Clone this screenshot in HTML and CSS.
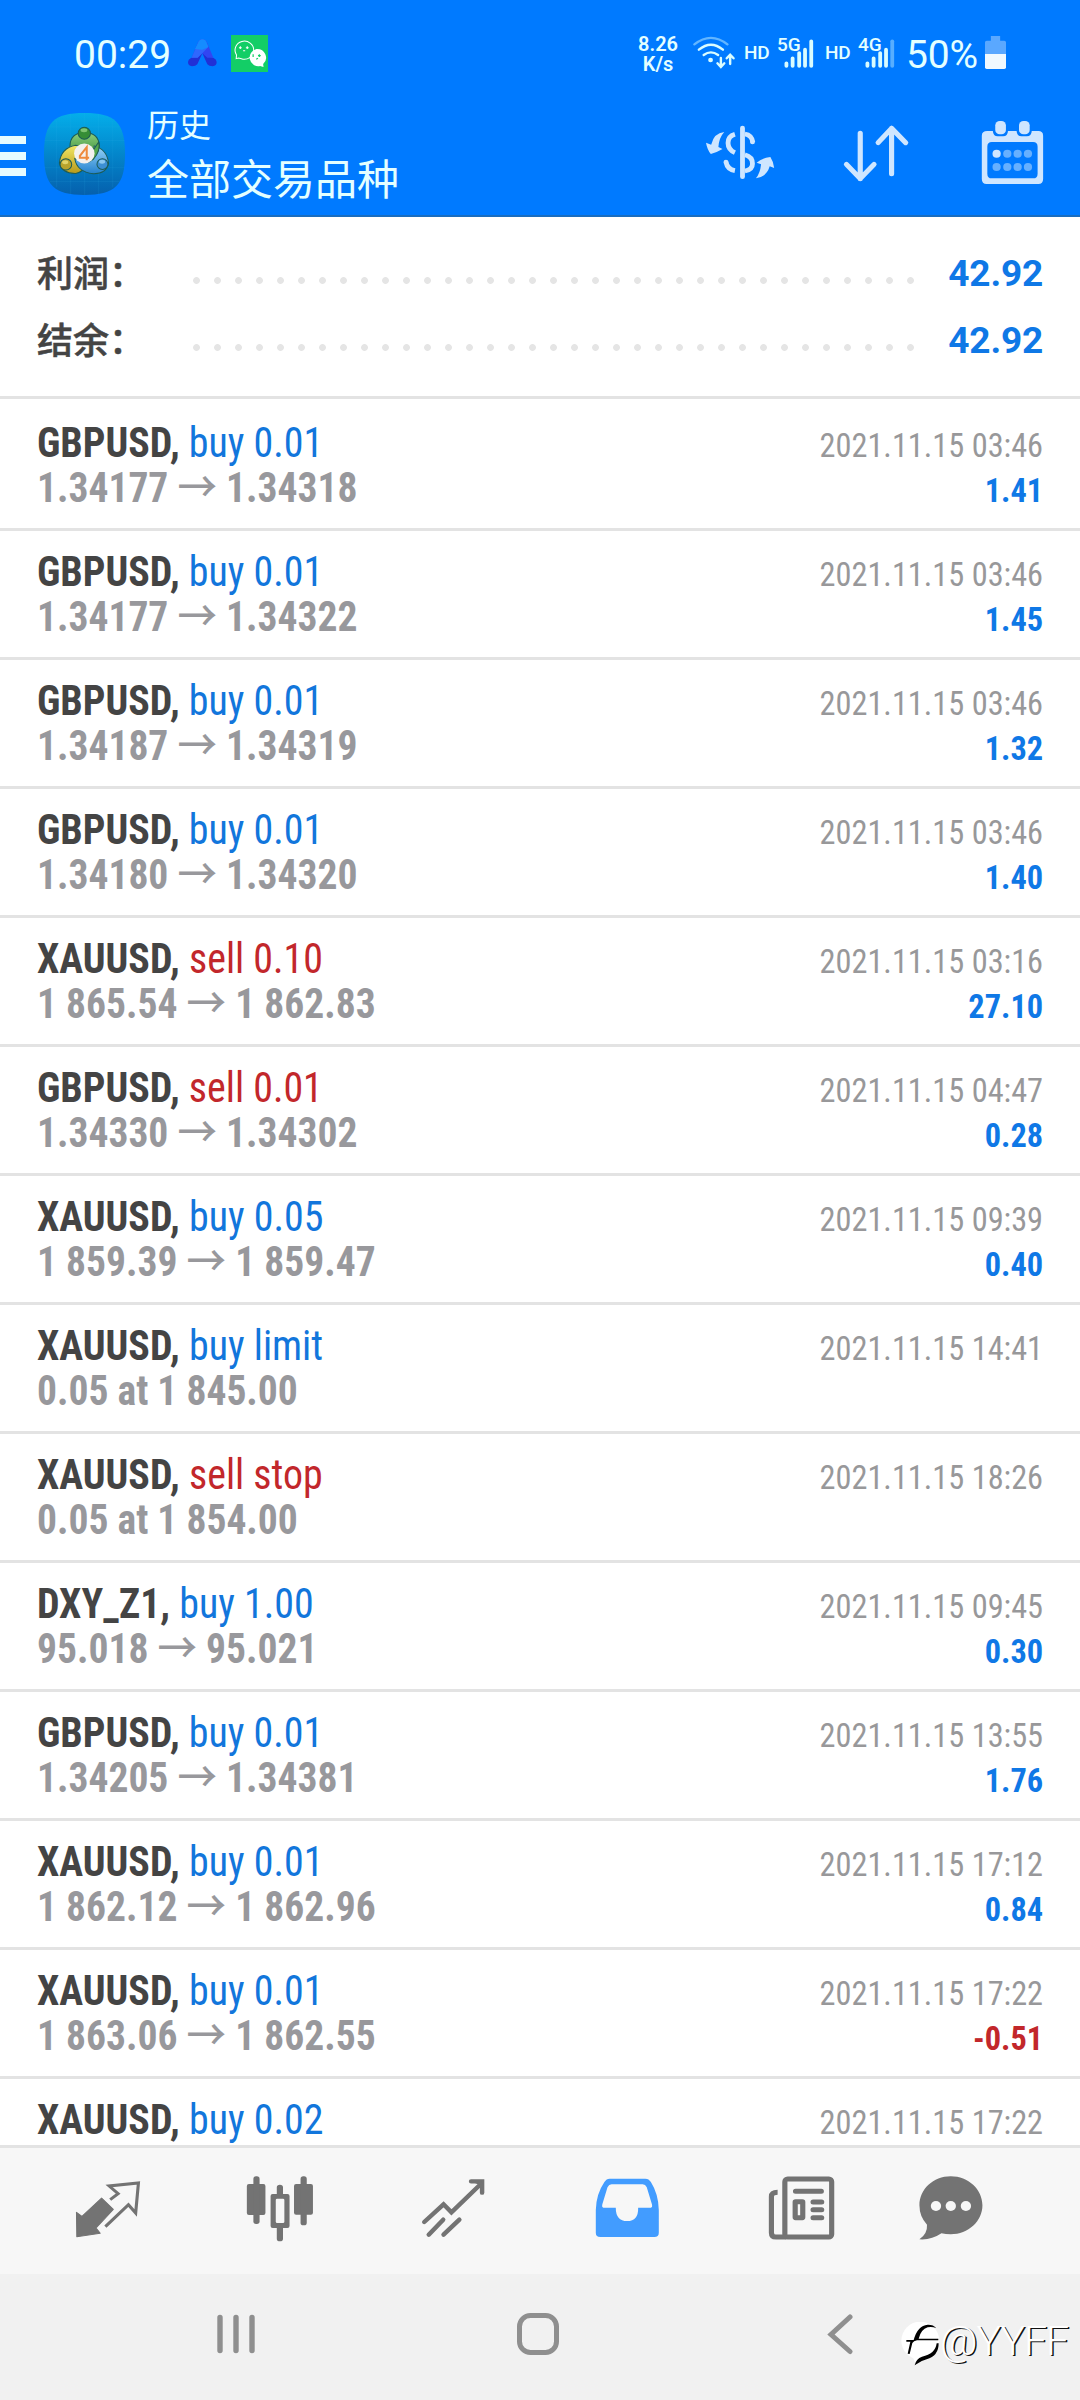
FILE: index.html
```html
<!DOCTYPE html>
<html lang="zh-CN">
<head>
<meta charset="utf-8">
<title>历史</title>
<link rel="stylesheet" href="styles.css">
</head>
<body>
<div class="screen">
  <header class="top">
    <div class="status">
      <span class="clock">00:29</span>
      <svg class="note-a" viewBox="545 118 87 84" preserveAspectRatio="none">
        <path d="M574 149l14 12-15 33q-5 6-16 6-12-2-12-13 0-8 9-12l10-3z" fill="#2130d6"/>
        <path d="M602 150l-14 11 15 33q5 6 16 6 12-2 12-13 0-8-9-12l-9-3z" fill="#2130d6"/>
        <path d="M574 130q5-11 14-11 10 0 15 12l18 43h-18l-15-13-14 13h-18z" fill="#3146f2"/>
        <path d="M588 119q9 0 13 10l5 13-18 19-14 13h-18l19-44q4-11 13-11z" fill="#2f68fd"/>
        <path d="M588 119q9 0 13 10l5 13-18 8-22-2 9-18q4-11 13-11z" fill="#158cff"/>
      </svg>
      <svg class="note-w" viewBox="671 105 107 111" preserveAspectRatio="none">
        <rect x="671" y="105" width="107" height="111" fill="#13ce66"/>
        <path d="M686 176l1-11a27 27 0 1 1 14 11l-8-2z" fill="none" stroke="#fff" stroke-width="3"/>
        <path d="M694 143h8M698 139v8M714 143h8M718 139v8M706 152h6" stroke="#fff" stroke-width="3"/>
        <path d="M745 147a25 26 0 1 0 10 51l10 3-1-9a26 26 0 0 0-19-45z" fill="#fff"/>
        <path d="M735 163v8M749 167h8M753 163v8M744 178l5-3" stroke="#13ce66" stroke-width="3.5"/>
      </svg>
      <span class="speed">8.26<br>K/s</span>
      <svg class="wifi" viewBox="440 102 128 111" preserveAspectRatio="none" fill="none" stroke="#d9fcff" stroke-width="7" stroke-linecap="round">
        <path d="M447 133Q495 94 543 133" opacity=".45"/>
        <path d="M460 149Q495 119 530 149M474 165Q495 149 516 165"/>
        <circle cx="494" cy="180" r="3.5" fill="#d9fcff"/>
        <path d="M524 174v26m-10-10l10 11 10-11M551 192v-27m-10 10l10-11 10 11"/>
      </svg>
      <span class="hd">HD</span>
      <span class="signal"><b>5G</b>
        <svg viewBox="711 118 87 90" preserveAspectRatio="none" stroke="#d9fcff" stroke-width="11" stroke-linecap="round"><path d="M718 191v8M736 176v23M755 160v39M772 150v49M790 125v74"/></svg></span>
      <span class="hd">HD</span>
      <span class="signal"><b>4G</b>
        <svg viewBox="711 118 87 90" preserveAspectRatio="none" stroke="#d9fcff" stroke-width="11" stroke-linecap="round"><path d="M718 191v8M736 176v23M755 160v39M772 150v49"/><path d="M790 125v74" opacity=".4"/></svg></span>
      <span class="percent">50%</span>
      <svg class="battery" viewBox="1292 108 61 99" preserveAspectRatio="none">
        <path d="M1309 108h27v14h12q5 0 5 5v36h-61v-36q0-5 5-5h12z" fill="#5aa8ff"/>
        <path d="M1292 162h61v40q0 5-5 5h-51q-5 0-5-5z" fill="#f0f9ff"/>
      </svg>
    </div>
    <div class="bar">
      <div class="menu"><i></i><i></i><i></i></div>
      <svg class="logo" viewBox="43 38 237 247" preserveAspectRatio="none">
        <defs>
          <linearGradient id="bg" x2="0" y2="1"><stop offset="0" stop-color="#04aeea"/><stop offset=".5" stop-color="#0386cb"/><stop offset="1" stop-color="#0560ad"/></linearGradient>
          <linearGradient id="gr" x2="0" y2="1"><stop offset="0" stop-color="#8fce7c"/><stop offset="1" stop-color="#2f8a35"/></linearGradient>
          <linearGradient id="ye" x2="0" y2="1"><stop offset="0" stop-color="#f2e765"/><stop offset="1" stop-color="#b79a1c"/></linearGradient>
          <linearGradient id="bl" x2="0" y2="1"><stop offset="0" stop-color="#9bd6f7"/><stop offset="1" stop-color="#2381cf"/></linearGradient>
        </defs>
        <path d="M161 38C250 38 280 65 280 161S250 285 161 285 43 257 43 161 72 38 161 38z" fill="url(#bg)"/>
        <path d="M80 60v202M121 40v243M162 38v247M203 40v243M244 60v202M60 80h204M44 121h235M44 203h235M60 244h204" stroke="#3fb9ec" stroke-opacity=".18" stroke-width="2"/>
        <g stroke="#1d5c55" stroke-width="3">
          <path d="M119 138q0-39 43-42 42 3 43 42l-8 38h-70z" fill="url(#gr)"/>
          <path d="M136 135q-44 8-48 54 8 32 48 31 20-4 26-20l-12-60z" fill="url(#ye)"/>
          <path d="M190 137q38 11 42 53-7 32-45 31-48-6-54-46l20 8 32-6z" fill="url(#bl)"/>
          <path d="M203 125q7 26-16 53l-14 8 10-30z" fill="#54a84d"/>
          <circle cx="161" cy="99" r="18" fill="#358d36"/>
          <circle cx="107" cy="193" r="17" fill="#b8a32c"/>
          <circle cx="214" cy="192" r="16" fill="#3c8fd3"/>
        </g>
        <ellipse cx="160" cy="90" rx="10" ry="6" fill="#9edb8c" opacity=".7"/>
        <ellipse cx="105" cy="186" rx="9" ry="6" fill="#f4e883" opacity=".7"/>
        <ellipse cx="213" cy="185" rx="9" ry="6" fill="#aee0fb" opacity=".7"/>
        <circle cx="161" cy="160" r="30" fill="#f4f1ee"/>
        <path d="M168 180v-39l-20 26v6h27" fill="none" stroke="#ee8a3c" stroke-width="6"/>
      </svg>
      <div class="titles"><div class="sub">历史</div><div class="main">全部交易品种</div></div>
      <svg class="tool" viewBox="464.6 336 232.3 240" preserveAspectRatio="none">
        <path d="M588 384v146" stroke="#cfe6ff" stroke-width="14" stroke-linecap="round"/>
        <path d="M566 403q-20 6-20 26 0 20 20 29M540 486q4 22 26 26M595 402q20 3 23 25M595 464q22 6 22 27 0 18-22 22" fill="none" stroke="#cfe6ff" stroke-width="14"/>
        <circle cx="540" cy="486" r="7" fill="#cfe6ff"/><circle cx="617" cy="426" r="7" fill="#cfe6ff"/>
        <path d="M535 396q-30 3-38 38l-15-6q4 22 14 34 16-4 34-15l-12-6q2-28 17-45zM627 535q12-14 15-42l-13-5q17-14 40-17 9 14 11 33l-13-5q-9 32-40 36z" fill="#cfe6ff"/>
      </svg>
      <svg class="tool" viewBox="859.6 336 232.3 240" preserveAspectRatio="none" fill="none" stroke="#cfe6ff" stroke-width="15" stroke-linecap="round" stroke-linejoin="round">
        <path d="M930 400v136M890 493l40 43 40-43M1021 521V385M982 428l39-43 41 43"/>
      </svg>
      <svg class="tool" viewBox="1254.5 336 232.3 240" preserveAspectRatio="none">
        <path d="M1299 393H1315Q1316 409 1329 409H1345Q1358 409 1359 393H1384Q1385 409 1398 409H1414Q1427 409 1428 393H1447Q1461 393 1461 407V537Q1461 552 1447 552H1297Q1283 552 1283 537V407Q1283 393 1299 393ZM1312 426Q1299 426 1299 440V521Q1299 535 1312 535H1432Q1445 535 1445 521V440Q1445 426 1432 426Z" fill="#cfe6ff" fill-rule="evenodd"/>
        <rect x="1322" y="363" width="31" height="40" rx="13" fill="#cfe6ff"/><rect x="1391" y="363" width="31" height="40" rx="13" fill="#cfe6ff"/>
        <circle cx="1326" cy="461" r="12" fill="#cfe6ff"/>
        <g fill="#66b0ff"><circle cx="1357" cy="461" r="12"/><circle cx="1387" cy="461" r="12"/><circle cx="1417" cy="461" r="12"/><circle cx="1326" cy="501" r="12"/><circle cx="1357" cy="501" r="12"/><circle cx="1387" cy="501" r="12"/><circle cx="1417" cy="501" r="12"/></g>
      </svg>
    </div>
  </header>
  <section class="summary">
    <div class="sum"><span class="label">利润：</span><span class="dots"></span><span class="total">42.92</span></div>
    <div class="sum"><span class="label">结余：</span><span class="dots"></span><span class="total">42.92</span></div>
  </section>
  <main class="list">
    <div class="row"><div class="deal"><div><b>GBPUSD,</b> <span class="buy">buy 0.01</span></div><div class="price">1.34177 <i>→</i> 1.34318</div></div><div class="meta"><div>2021.11.15 03:46</div><div class="gain">1.41</div></div></div>
    <div class="row"><div class="deal"><div><b>GBPUSD,</b> <span class="buy">buy 0.01</span></div><div class="price">1.34177 <i>→</i> 1.34322</div></div><div class="meta"><div>2021.11.15 03:46</div><div class="gain">1.45</div></div></div>
    <div class="row"><div class="deal"><div><b>GBPUSD,</b> <span class="buy">buy 0.01</span></div><div class="price">1.34187 <i>→</i> 1.34319</div></div><div class="meta"><div>2021.11.15 03:46</div><div class="gain">1.32</div></div></div>
    <div class="row"><div class="deal"><div><b>GBPUSD,</b> <span class="buy">buy 0.01</span></div><div class="price">1.34180 <i>→</i> 1.34320</div></div><div class="meta"><div>2021.11.15 03:46</div><div class="gain">1.40</div></div></div>
    <div class="row"><div class="deal"><div><b>XAUUSD,</b> <span class="sell">sell 0.10</span></div><div class="price">1 865.54 <i>→</i> 1 862.83</div></div><div class="meta"><div>2021.11.15 03:16</div><div class="gain">27.10</div></div></div>
    <div class="row"><div class="deal"><div><b>GBPUSD,</b> <span class="sell">sell 0.01</span></div><div class="price">1.34330 <i>→</i> 1.34302</div></div><div class="meta"><div>2021.11.15 04:47</div><div class="gain">0.28</div></div></div>
    <div class="row"><div class="deal"><div><b>XAUUSD,</b> <span class="buy">buy 0.05</span></div><div class="price">1 859.39 <i>→</i> 1 859.47</div></div><div class="meta"><div>2021.11.15 09:39</div><div class="gain">0.40</div></div></div>
    <div class="row"><div class="deal"><div><b>XAUUSD,</b> <span class="buy">buy limit</span></div><div class="price">0.05 at 1 845.00</div></div><div class="meta"><div>2021.11.15 14:41</div></div></div>
    <div class="row"><div class="deal"><div><b>XAUUSD,</b> <span class="sell">sell stop</span></div><div class="price">0.05 at 1 854.00</div></div><div class="meta"><div>2021.11.15 18:26</div></div></div>
    <div class="row"><div class="deal"><div><b>DXY_Z1,</b> <span class="buy">buy 1.00</span></div><div class="price">95.018 <i>→</i> 95.021</div></div><div class="meta"><div>2021.11.15 09:45</div><div class="gain">0.30</div></div></div>
    <div class="row"><div class="deal"><div><b>GBPUSD,</b> <span class="buy">buy 0.01</span></div><div class="price">1.34205 <i>→</i> 1.34381</div></div><div class="meta"><div>2021.11.15 13:55</div><div class="gain">1.76</div></div></div>
    <div class="row"><div class="deal"><div><b>XAUUSD,</b> <span class="buy">buy 0.01</span></div><div class="price">1 862.12 <i>→</i> 1 862.96</div></div><div class="meta"><div>2021.11.15 17:12</div><div class="gain">0.84</div></div></div>
    <div class="row"><div class="deal"><div><b>XAUUSD,</b> <span class="buy">buy 0.01</span></div><div class="price">1 863.06 <i>→</i> 1 862.55</div></div><div class="meta"><div>2021.11.15 17:22</div><div class="gain loss">-0.51</div></div></div>
    <div class="row"><div class="deal"><div><b>XAUUSD,</b> <span class="buy">buy 0.02</span></div></div><div class="meta"><div>2021.11.15 17:22</div></div></div>
  </main>
  <nav class="tabs">
    <svg viewBox="180 207 261.4 270" preserveAspectRatio="none">
      <path d="M222 367l16 12 57-55 34 34-50 56 12 16-68 10z" fill="#737373" stroke="#737373" stroke-width="3" stroke-linejoin="round"/>
      <path d="M320 329l23-18-26-23 85-9-8 90-21-25-67 66" fill="none" stroke="#737373" stroke-width="9"/>
    </svg>
    <svg viewBox="682.6 207 261.4 270" preserveAspectRatio="none" fill="#737373">
      <rect x="717" y="282" width="54" height="93" rx="6"/><rect x="736" y="259" width="18" height="143" rx="8"/>
      <rect x="854" y="282" width="55" height="92" rx="6"/><rect x="873" y="259" width="18" height="147" rx="8"/>
      <path d="M804 312v-20q0-8 9-8t9 8v20h13q6 0 6 6v90q0 6-6 6h-13v32q0 8-9 8t-9-8v-32h-12q-6 0-6-6v-90q0-6 6-6zm1 14q-4 0-4 4v65q0 4 4 4h17q4 0 4-4v-65q0-4-4-4z" fill-rule="evenodd"/>
    </svg>
    <svg viewBox="1184.8 207 261.4 270" preserveAspectRatio="none" fill="none" stroke="#737373" stroke-width="13" stroke-linecap="round">
      <path d="M1232 396l56-53 23 24 86-86M1368 274h32v34M1245 434l42-45M1288 434l46-45"/><path d="M1368 274h32l-6 12z" fill="#737373" stroke="none"/>
    </svg>
    <svg viewBox="119 207 261.4 270" preserveAspectRatio="none">
      <path d="M202 266H306Q316 266 322 276Q344 312 345 360V428Q345 441 332 441H175Q162 441 162 428V360Q163 312 187 276Q193 266 202 266ZM208 283Q200 283 196 292L181 343Q179 353 184 353H220Q220 393 253 393T285 353H322Q327 353 325 343L310 292Q306 283 298 283Z" fill="#429cff" fill-rule="evenodd"/>
    </svg>
    <svg viewBox="621.4 207 261.4 270" preserveAspectRatio="none" fill="none" stroke="#737373" stroke-width="15">
      <rect x="711" y="267" width="136" height="174" rx="8"/>
      <path d="M690 307q-18 0-18 13v108q0 13 13 13h30"/>
      <path d="M742 304h75M793 336h25M793 359h25M793 383h25" stroke-linecap="round"/>
      <rect x="741" y="335" width="22" height="48" rx="1"/>
    </svg>
    <svg class="last" viewBox="1063 207 261.4 270" preserveAspectRatio="none">
      <path d="M1193 259c51 0 92 39 92 87s-41 87-92 87q-15 0-27-3-30 21-64 18 24-18 22-44-22-24-22-58c0-48 40-87 91-87z" fill="#737373"/>
      <g fill="#f7f7f7"><circle cx="1150" cy="348" r="15"/><circle cx="1193" cy="348" r="15"/><circle cx="1237" cy="348" r="15"/></g>
    </svg>
  </nav>
  <footer class="system">
    <svg class="recent" viewBox="0 0 40 42" fill="none" stroke="#8f8f8f" stroke-width="5.4" stroke-linecap="round"><path d="M4 4.5v33M20 4.5v33M36 4.5v33"/></svg>
    <svg class="home" viewBox="0 0 42 42" fill="none" stroke="#8f8f8f" stroke-width="5"><rect x="2.5" y="2.5" width="37" height="37" rx="11"/></svg>
    <svg class="back" viewBox="0 0 28 42" fill="none" stroke="#8f8f8f" stroke-width="5" stroke-linecap="round"><path d="M23 4L4 21.500 23 38.500"/></svg>
  </footer>
  <div class="watermark">
    <svg viewBox="34 36 120 132">
      <circle cx="92" cy="92" r="57" fill="#fff"/><path d="M70 140l8 26 50-38z" fill="#fff"/>
      <path d="M50 90h22q12-44 42-46 16-1 26 10-14-5-26-2-20 6-27 34h59v5H82q-10 2-14 8l-8 33-6-1 8-36H50zM141 100h6q0 38-36 48-18 4-36 18 4-20 22-26 40-8 44-40z" fill="#000"/>
    </svg>
    <span>@YYFF</span>
  </div>
</div>
</body>
</html>
```
FILE: styles.css
```css
* { box-sizing: border-box; }
body { margin: 0; background: #fff; font-family: Roboto, "Noto Sans CJK SC", sans-serif; }
svg { display: block; flex: none; }
.screen { position: relative; width: 1080px; height: 2400px; overflow: hidden; display: flex; flex-direction: column; }

.top { height: 217px; flex: none; background: #007aff; border-bottom: 2px solid #1a6dbf; color: #e4ffff; }
.status { height: 96px; display: flex; align-items: flex-start; padding-left: 74px; padding-top: 35px; white-space: nowrap; }
.clock { width: 114px; font-size: 39px; line-height: 40px; }
.note-a { width: 29px; height: 28px; margin-top: 4px; }
.note-w { width: 37px; height: 37px; margin-left: 14px; }
.speed { width: 44px; margin-left: 368px; font-size: 20px; font-weight: 600; line-height: 19.5px; text-align: center; }
.wifi { width: 44px; height: 37px; margin-left: 12px; margin-top: -1px; }
.hd { width: 28px; margin-left: 8px; margin-top: 7px; font-size: 19px; font-weight: 500; line-height: 22px; letter-spacing: -.3px; }
.signal { display: grid; width: 40px; height: 37px; margin-left: 5px; }
.signal b { grid-area: 1 / 1; font-size: 19px; font-weight: 500; line-height: 20px; }
.signal svg { grid-area: 1 / 1; width: 30px; height: 30px; margin: 4px 0 0 7px; }
.percent { width: 79px; margin-left: 8px; font-size: 39px; line-height: 40px; letter-spacing: -.2px; }
.battery { width: 21px; height: 33px; margin-top: 1px; }

.bar { display: flex; align-items: flex-start; }
.menu { width: 26px; display: grid; gap: 8px; margin-top: 40px; }
.menu i { height: 8px; background: #e6fbff; }
.logo { width: 81px; height: 82px; margin: 17px 0 0 18px; }
.titles { width: 552px; margin: 3px 0 0 22px; font-family: "Noto Sans CJK SC", sans-serif; }
.sub { font-size: 32px; line-height: 48px; }
.main { font-size: 42px; line-height: 60px; }
.tool { width: 80px; height: 80px; margin: 16px 55px 0 1px; }
.tool:last-child { margin-right: 0; }

.summary { height: 182px; flex: none; padding: 22px 37px 0; border-bottom: 3px solid #e3e3e3; }
.sum { display: flex; height: 67px; }
.label { width: 149px; font: 500 36px/64px "Noto Sans CJK SC", sans-serif; color: #444; -webkit-text-stroke: .5px #444; }
.dots { width: 735px; background: radial-gradient(circle, #e5e5e5 3px, transparent 3.8px) 0 31px / 21px 21px repeat-x; }
.total { flex: 1; text-align: right; font-size: 37px; line-height: 69px; font-weight: 700; letter-spacing: -.2px; color: #0f78e6; }

.list { height: 1746px; flex: none; overflow: hidden; padding-top: 3px; }
.row { display: flex; justify-content: space-between; height: 129px; padding: 18px 37px 0; border-bottom: 3px solid #e3e3e3; line-height: 45px; font-stretch: 75%; white-space: nowrap; }
.deal { font-size: 42px; color: #444; }
/* The platform's condensed face is slightly narrower than Roboto at 75% width */
.deal > div { height: 45px; transform: scaleX(.95); transform-origin: left; }
.deal b { font-weight: 700; }
.buy { color: #1276dc; }
.sell { color: #c2272b; }
.deal > .price { color: #98989c; font-weight: 700; transform: scaleX(.941); }
.price i { font: 500 42px/0 "Noto Sans CJK SC", sans-serif; }
.meta { padding-top: 3px; font-size: 34px; text-align: right; color: #98989a; transform: scaleX(.951); transform-origin: right; }
.gain { font-weight: 700; color: #0f78e6; }
.loss { color: #c2272b; }

.tabs { height: 129px; flex: none; background: #f7f7f7; border-top: 3px solid #e3e3e3; display: flex; gap: 83px; padding: 11px 0 0 62px; }
.tabs svg { width: 90px; height: 90px; }
.tabs .last { margin-left: -21px; }

.system { flex: 1; background: #f1f1f1; display: flex; padding-top: 39px; }
.recent { width: 40px; height: 42px; margin-left: 216px; }
.home { width: 42px; height: 42px; margin-left: 261px; }
.back { width: 28px; height: 42px; margin-left: 268px; }

.watermark { position: absolute; left: 901px; top: 2322px; display: flex; color: #fff; }
.watermark svg { width: 40px; height: 44px; }
.watermark span { font-size: 41px; font-weight: 300; line-height: 38px; letter-spacing: -1px; margin-left: -1px; text-shadow: 1.5px 1px 0 #111; }
```
